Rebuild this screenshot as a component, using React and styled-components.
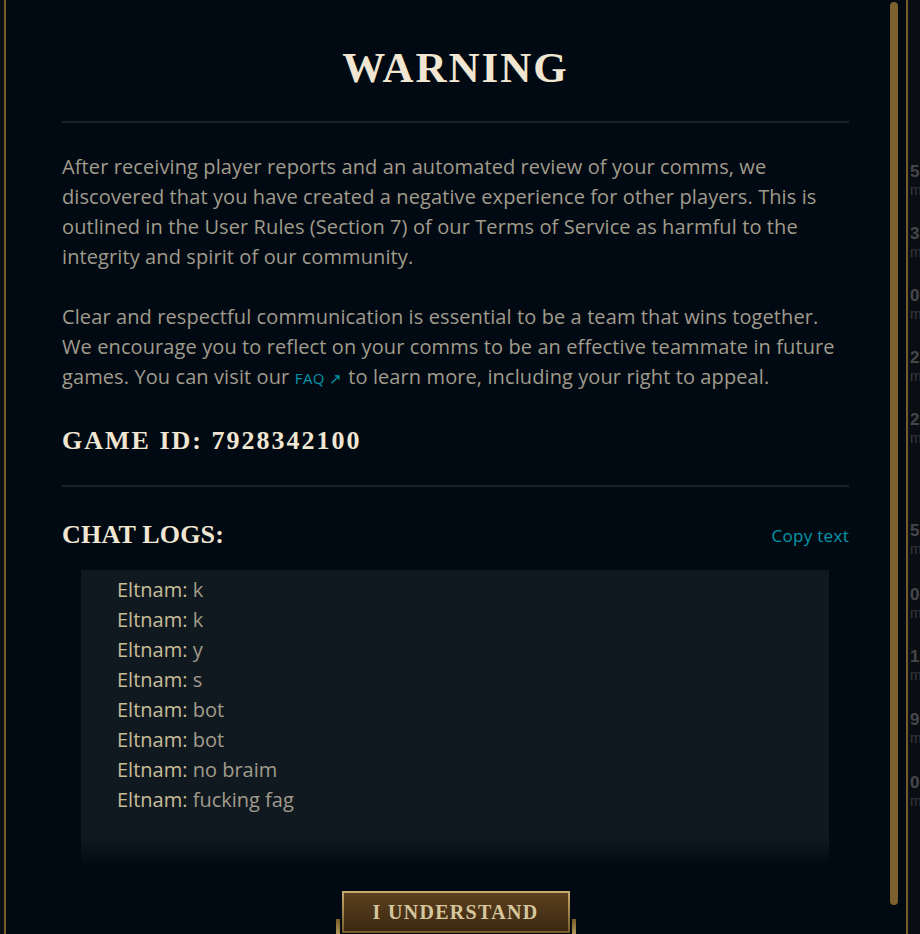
import React from "react";
import styled, { createGlobalStyle } from "styled-components";

const GlobalStyle = createGlobalStyle`
  html, body {
    margin: 0;
    padding: 0;
    height: 100%;
    background: #010a13;
    overflow: hidden;
  }
  #root {
    height: 100%;
  }
`;

const gold = "#785a28";

const Page = styled.div`
  position: relative;
  height: 100%;
  display: flex;
  background: #0a0e13;
`;

const Lobby = styled.div`
  flex: 1;
`;

const Ladder = styled.div`
  width: 12px;
  padding-top: 162px;
  display: flex;
  flex-direction: column;
  border-left: 1px solid #24201a;
  overflow: hidden;
`;

const LadderRow = styled.div`
  height: ${(p) => p.h || 62}px;
  padding-left: 2px;
  font-family: "Liberation Sans", sans-serif;
  white-space: nowrap;
`;

const LadderRank = styled.div`
  font-size: 17px;
  font-weight: bold;
  line-height: 20px;
  color: #45464a;
`;

const LadderSub = styled.div`
  font-size: 14px;
  line-height: 16px;
  color: #35363a;
`;

const Modal = styled.div`
  position: absolute;
  top: 0;
  left: 4px;
  width: 900px;
  height: 100%;
  background: #010a13;
  border-left: 2px solid ${gold};
  border-right: 2px solid ${gold};
  display: flex;
`;

const Scroller = styled.div`
  flex: 1;
  overflow: hidden;
`;

/* scroll rail on the right edge of the dialog */
const Rail = styled.div`
  width: 16px;
  padding: 2px 8px 29px 0;
  box-sizing: border-box;
  display: flex;
`;

const Thumb = styled.div`
  flex: 1;
  border-radius: 4px;
  background: #7e5f2e;
`;

const Content = styled.div`
  padding: 40px 41px 36px 56px;
  display: flex;
  flex-direction: column;
`;

const Title = styled.h1`
  margin: 0;
  text-align: center;
  font-family: "Liberation Serif", serif;
  font-weight: bold;
  font-size: 43px;
  line-height: 56px;
  letter-spacing: 2px;
  color: #f0e6d2;
`;

const Divider = styled.hr`
  margin: ${(p) => p.m || "25px 0 0"};
  border: none;
  height: 2px;
  background: #1a2128;
`;

const Para = styled.p`
  margin: ${(p) => p.m || "30px 0 0"};
  font-family: "Open Sans", "Liberation Sans", sans-serif;
  font-size: 20px;
  line-height: 30px;
  letter-spacing: 0.1px;
  color: #a09b8c;
`;

const Faq = styled.a`
  font-size: 15px;
  letter-spacing: 0.5px;
  color: #0596aa;
  text-decoration: none;
`;

const Heading = styled.h2`
  margin: 0;
  font-family: "Liberation Serif", serif;
  font-weight: bold;
  font-size: 26px;
  line-height: 36px;
  letter-spacing: ${(p) => p.ls || "0.2px"};
  color: #f0e6d2;
`;

const SectionHead = styled.div`
  margin-top: ${(p) => p.mt || 28}px;
  display: flex;
  align-items: center;
  justify-content: space-between;
`;

const CopyLink = styled.button`
  padding: 0;
  border: none;
  background: none;
  font-family: "Open Sans", "Liberation Sans", sans-serif;
  font-size: 17px;
  letter-spacing: 0.3px;
  color: #0596aa;
  cursor: pointer;
`;

const ChatBox = styled.div`
  position: relative;
  margin: 17px 20px 0 19px;
  height: 296px;
  padding: 5px 36px;
  box-sizing: border-box;
  background: #111920;

  &::after {
    content: "";
    position: absolute;
    left: 0;
    right: 0;
    bottom: 0;
    height: 30px;
    background: linear-gradient(to bottom, rgba(1, 10, 19, 0), #010a13);
  }
`;

const ChatLine = styled.div`
  font-family: "Open Sans", "Liberation Sans", sans-serif;
  font-size: 20px;
  line-height: 30px;
  color: #a09b8c;
`;

const Sender = styled.span`
  color: #c8bd99;
`;

const Actions = styled.div`
  margin-top: 25px;
  display: flex;
  justify-content: center;
`;

const Button = styled.button`
  position: relative;
  width: 228px;
  height: 42px;
  border: 2px solid transparent;
  background:
    linear-gradient(to bottom, #5c3f1d, #3c2913) padding-box,
    linear-gradient(to bottom, #c8aa6e, #785a28) border-box;
  font-family: "Liberation Serif", serif;
  font-weight: bold;
  font-size: 20px;
  letter-spacing: 1.3px;
  color: #d5c69d;
  cursor: pointer;

  &::before,
  &::after {
    content: "";
    position: absolute;
    top: 26px;
    width: 4px;
    height: 20px;
    background: linear-gradient(to bottom, #785a28, #c8aa6e);
  }
  &::before {
    left: -8px;
  }
  &::after {
    right: -8px;
  }
`;

const ladder = [
  { rank: "5", sub: "m" },
  { rank: "3", sub: "m" },
  { rank: "0", sub: "m" },
  { rank: "2", sub: "m" },
  { rank: "2", sub: "m", h: 111 },
  { rank: "5", sub: "m", h: 64 },
  { rank: "0", sub: "m" },
  { rank: "1", sub: "m", h: 63 },
  { rank: "9", sub: "m", h: 63 },
  { rank: "0", sub: "m" },
];

const chat = ["k", "k", "y", "s", "bot", "bot", "no braim", "fucking fag"];

export default function App() {
  return (
    <>
      <GlobalStyle />
      <Page>
        <Lobby />
        <Ladder>
          {ladder.map((r, i) => (
            <LadderRow key={i} h={r.h}>
              <LadderRank>{r.rank}</LadderRank>
              <LadderSub>{r.sub}</LadderSub>
            </LadderRow>
          ))}
        </Ladder>

        <Modal>
          <Scroller>
            <Content>
              <Title>WARNING</Title>
              <Divider />
              <Para m="29px 0 0">
                After receiving player reports and an automated review of your comms, we
                discovered that you have created a negative experience for other players. This is
                outlined in the User Rules (Section 7) of our Terms of Service as harmful to the
                integrity and spirit of our community.
              </Para>
              <Para>
                Clear and respectful communication is essential to be a team that wins together.
                We encourage you to reflect on your comms to be an effective teammate in future
                games. You can visit our <Faq href="#">FAQ ↗</Faq> to learn more, including your right to appeal.
              </Para>

              <SectionHead mt={30}>
                <Heading ls="2px">GAME ID: 7928342100</Heading>
              </SectionHead>
              <Divider m="26px 0 0" />

              <SectionHead mt={30}>
                <Heading>CHAT LOGS:</Heading>
                <CopyLink>Copy text</CopyLink>
              </SectionHead>
              <ChatBox>
                {chat.map((msg, i) => (
                  <ChatLine key={i}>
                    <Sender>Eltnam:</Sender> {msg}
                  </ChatLine>
                ))}
              </ChatBox>

              <Actions>
                <Button>I UNDERSTAND</Button>
              </Actions>
            </Content>
          </Scroller>
          <Rail>
            <Thumb />
          </Rail>
        </Modal>
      </Page>
    </>
  );
}
